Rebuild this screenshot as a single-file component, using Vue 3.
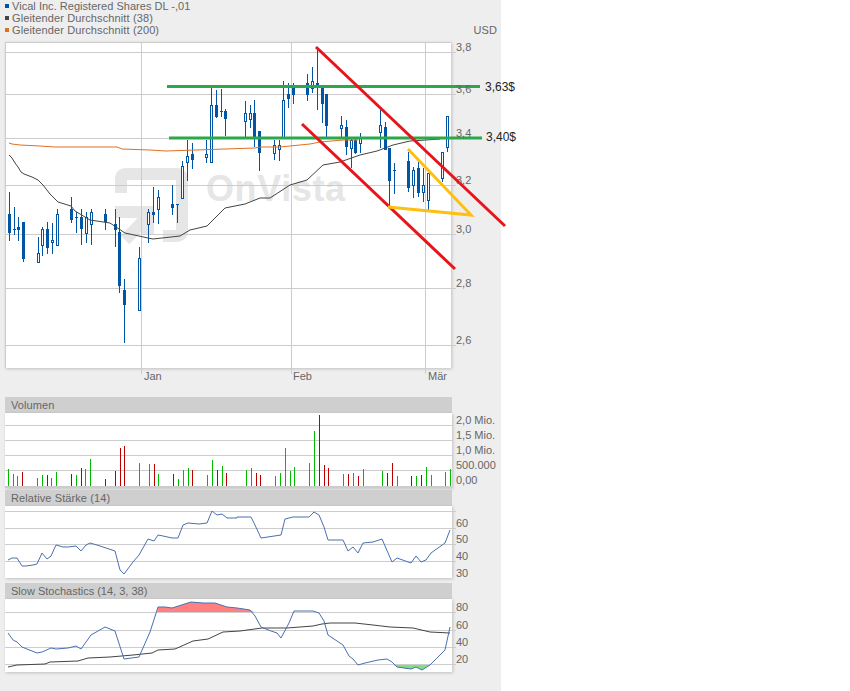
<script setup>
// candles: x, high, low, body top, body bottom, filled (1) or hollow (0)
const candles = [
  [9, 192, 241, 214, 233, 1], [14, 207, 235, 229, 230, 1], [18, 217, 241, 227, 230, 1], [23, 222, 262, 222, 259, 1],
  [38, 237, 262, 253, 262, 0], [42, 227, 256, 229, 245, 0], [47, 222, 254, 229, 248, 1], [52, 223, 254, 240, 242, 0],
  [57, 209, 245, 214, 245, 0], [71, 197, 223, 209, 220, 1], [76, 212, 233, 217, 218, 1], [81, 209, 245, 217, 229, 1],
  [86, 212, 243, 217, 233, 0], [91, 209, 245, 212, 224, 0], [105, 209, 230, 214, 222, 1], [115, 209, 247, 224, 230, 1],
  [119, 217, 293, 232, 286, 1], [124, 279, 343, 290, 305, 1], [139, 247, 310, 258, 310, 0], [148, 209, 243, 212, 224, 0],
  [153, 187, 223, 212, 215, 1], [158, 190, 224, 197, 209, 0], [172, 185, 215, 204, 208, 1], [177, 204, 223, 204, 205, 1],
  [182, 161, 198, 166, 198, 0], [187, 140, 181, 156, 162, 0], [192, 143, 169, 154, 160, 1], [206, 140, 163, 154, 157, 0],
  [211, 87, 163, 105, 162, 0], [216, 90, 118, 105, 117, 1], [221, 89, 117, 111, 112, 1], [225, 109, 136, 111, 119, 1],
  [245, 101, 138, 113, 121, 0], [250, 105, 128, 113, 119, 0], [254, 100, 147, 113, 138, 1], [259, 131, 171, 131, 153, 1],
  [274, 140, 160, 145, 153, 0], [279, 140, 161, 145, 149, 0], [283, 81, 138, 100, 138, 0], [288, 83, 108, 94, 99, 1],
  [293, 83, 104, 88, 95, 1], [307, 74, 101, 83, 95, 1], [312, 67, 93, 81, 88, 0], [317, 48, 110, 83, 88, 1],
  [322, 88, 123, 88, 104, 1], [326, 94, 138, 94, 126, 1], [341, 116, 138, 125, 128, 0], [346, 120, 155, 127, 147, 1],
  [351, 138, 168, 140, 148, 0], [355, 138, 154, 140, 153, 1], [360, 133, 153, 137, 143, 0], [380, 110, 148, 125, 132, 0],
  [385, 122, 150, 127, 150, 1], [389, 148, 205, 148, 181, 1], [394, 163, 194, 170, 171, 1], [408, 152, 192, 161, 188, 1],
  [413, 167, 198, 170, 185, 0], [418, 162, 197, 168, 193, 1], [423, 168, 202, 185, 192, 0], [428, 173, 210, 173, 200, 0],
  [442, 152, 182, 152, 178, 0], [447, 116, 152, 116, 147, 0]
]

const ma38 = '9,155 12,158 15,163 18,167 21,172 24,174 32,177 38,180 43,185 50,194 58,202 71,206 75,211 90,220 110,223 125,233 148,238 153,239 180,236 190,230 207,226 225,208 245,204 260,198 270,198 290,185 307,180 323,165 340,162 360,155 377,151 393,145 410,141 426,140 440,139'
const ma200 = '9,143 12,144 20,145 40,146 55,147 117,147 122,149 150,150 166,151 255,148 260,147 280,147 310,144 320,142 343,140 358,140'

const volume = [
  [8, 469, 'g'], [13, 474, 'g'], [17, 476, 'g'], [22, 472, 'r'], [37, 478, 'g'], [42, 475, 'g'], [47, 475, 'r'], [51, 478, 'g'],
  [56, 472, 'g'], [71, 474, 'r'], [76, 475, 'g'], [81, 468, 'r'], [85, 469, 'g'], [90, 459, 'g'], [105, 479, 'r'], [115, 471, 'r'],
  [120, 448, 'r'], [124, 446, 'r'], [139, 463, 'g'], [149, 464, 'g'], [154, 464, 'r'], [158, 474, 'g'], [173, 474, 'r'], [178, 479, 'g'],
  [183, 470, 'g'], [188, 468, 'g'], [192, 470, 'r'], [207, 475, 'g'], [212, 460, 'g'], [217, 470, 'r'], [222, 466, 'g'], [226, 473, 'r'],
  [246, 470, 'g'], [251, 468, 'g'], [256, 473, 'r'], [260, 475, 'r'], [275, 476, 'g'], [280, 473, 'g'], [285, 448, 'g'], [290, 471, 'g'],
  [294, 467, 'g'], [309, 463, 'g'], [314, 431, 'g'], [319, 415, 'r'], [324, 465, 'r'], [328, 468, 'r'], [343, 474, 'g'], [348, 474, 'r'],
  [353, 473, 'g'], [358, 476, 'r'], [363, 469, 'g'], [382, 471, 'g'], [387, 473, 'r'], [392, 463, 'r'], [397, 476, 'g'], [411, 476, 'r'],
  [416, 476, 'g'], [421, 475, 'r'], [426, 467, 'g'], [431, 475, 'g'], [445, 472, 'g'], [450, 469, 'g']
]

const rsi = '8,560 12,558 17,558 22,566 26,566 33,565 37,564 42,553 47,559 51,556 56,545 63,547 68,547 76,546 81,551 86,545 90,543 97,545 115,551 120,570 124,574 133,562 139,555 148,539 154,541 158,535 163,536 172,538 178,538 183,525 188,523 199,524 207,523 212,511 217,515 222,514 227,518 237,518 237,517 251,517 254,523 261,538 281,535 285,519 293,517 309,517 314,512 319,515 324,527 328,540 343,540 348,551 353,547 358,553 363,543 373,542 382,539 392,562 397,558 411,563 416,556 421,562 426,560 431,553 445,543 450,530'

const stoch = '8,633 13,640 17,642 22,647 37,653 42,652 51,648 56,649 68,648 76,646 81,649 91,635 105,627 115,631 124,659 139,657 150,632 158,607 165,607 172,608 191,602 203,603 215,603 227,607 237,608 250,610 255,616 261,627 271,631 277,633 281,638 289,623 294,611 313,611 319,613 324,621 328,635 343,645 349,656 353,659 358,665 365,663 378,660 387,659 392,662 397,667 411,669 416,667 422,670 430,665 445,650 450,627'
const stochSlow = '8,667 17,665 45,664 50,662 78,661 88,658 110,657 133,655 152,653 158,650 175,649 193,641 208,639 223,632 240,631 262,628 287,628 300,627 313,626 322,624 330,623 355,623 373,625 390,627 413,628 430,632 450,633'
const stochHigh = '157,612 158,607 165,607 172,608 191,602 203,603 215,603 227,607 237,608 250,610 254,612'
const stochLow = '392,664 397,667 411,669 416,667 422,670 430,665 431,664'

const mainGrid = [52, 94, 138, 185, 234, 288, 345]
const mainLabels = [['3,8', 51], ['3,6', 93], ['3,4', 137], ['3,2', 184], ['3,0', 233], ['2,8', 287], ['2,6', 344]]
const months = [['Jan', 141, 144], ['Feb', 291, 293], ['Mär', 425, 428]]
const volLabels = [['2,0 Mio.', 424], ['1,5 Mio.', 439], ['1,0 Mio.', 454], ['500.000', 469], ['0,00', 484]]
const rsiLabels = [['60', 527], ['50', 543], ['40', 560], ['30', 577]]
const stochLabels = [['80', 611], ['60', 629], ['40', 646], ['20', 663]]

const stem = x => x + 0.5
</script>

<template>
  <div class="page">
    <div class="legend">
      <div class="legend-row first"><i class="dot blue"></i>Vical Inc. Registered Shares DL -,01</div>
      <div class="legend-row"><i class="dot dark"></i>Gleitender Durchschnitt (38)</div>
      <div class="legend-row"><i class="dot orange"></i>Gleitender Durchschnitt (200)<span class="unit">USD</span></div>
    </div>

    <!-- Kursverlauf -->
    <div class="plot main-plot">
      <svg class="chart" width="446" height="326" viewBox="5 42 446 326">
        <g class="mark">
          <path d="M121,193 V179 Q121,174 126,174 H177 Q182,174 182,179 V230 Q182,236 176,236 H163" />
          <path d="M115,212 H148 V234" />
          <path d="M125,240 L146,218" />
        </g>
        <text class="mark-text" x="206" y="201" textLength="139">OnVista</text>

        <g class="grid">
          <line v-for="y in mainGrid" :key="y" x1="5" x2="456" :y1="y + 0.5" :y2="y + 0.5" />
          <line v-for="m in months" :key="m[0]" :x1="m[1] + 0.5" :x2="m[1] + 0.5" y1="42" y2="374" />
        </g>

        <g v-for="c in candles" :key="c[0]" class="candle">
          <line :x1="stem(c[0])" :x2="stem(c[0])" :y1="c[1]" :y2="c[2]" />
          <rect v-if="c[5]" class="solid" :x="c[0] - 1" :y="c[3]" width="3" :height="c[4] - c[3]" />
          <rect v-else class="hollow" :x="c[0] - 0.5" :y="c[3] + 0.5" width="2" :height="c[4] - c[3]" />
        </g>

        <polyline class="line ma38" :points="ma38" />
        <polyline class="line ma200" :points="ma200" />

        <g class="drawn">
          <line class="green" x1="167" y1="86.5" x2="480" y2="86.5" />
          <line class="green" x1="169" y1="138" x2="482" y2="138" />
          <line class="red" x1="316" y1="47" x2="505" y2="226" />
          <line class="red" x1="302" y1="124" x2="455" y2="269" />
          <polyline class="yellow" points="408,149 471,215 388,207" />
        </g>

        <text v-for="l in mainLabels" :key="l[0]" class="axis" x="456" :y="l[1]">{{ l[0] }}</text>
        <text v-for="m in months" :key="m[0]" class="axis" :x="m[2]" y="380">{{ m[0] }}</text>
        <text class="note" x="485" y="91">3,63$</text>
        <text class="note" x="486" y="141">3,40$</text>
      </svg>
    </div>

    <section class="panel volume-panel">
      <h3>Volumen</h3>
      <div class="plot vol-plot">
        <svg class="chart" width="447" height="75" viewBox="5 413 447 75">
          <g class="grid">
            <line v-for="y in [425, 440, 455, 470]" :key="y" x1="5" x2="452" :y1="y + 0.5" :y2="y + 0.5" />
          </g>
          <line v-for="b in volume" :key="b[0]" :class="b[2] === 'g' ? 'up' : 'down'" :x1="b[0] + 0.5" :x2="b[0] + 0.5" :y1="b[1]" y2="486" />
          <text v-for="l in volLabels" :key="l[0]" class="axis" x="456" :y="l[1]">{{ l[0] }}</text>
        </svg>
      </div>
    </section>

    <section class="panel rsi-panel">
      <h3>Relative Stärke (14)</h3>
      <div class="plot rsi-plot">
        <svg class="chart" width="447" height="72" viewBox="5 506 447 72">
          <g class="grid">
            <line v-for="y in [511, 528, 544, 561]" :key="y" x1="5" x2="456" :y1="y + 0.5" :y2="y + 0.5" />
          </g>
          <polyline class="line osc" :points="rsi" />
          <text v-for="l in rsiLabels" :key="l[0]" class="axis" x="456" :y="l[1]">{{ l[0] }}</text>
        </svg>
      </div>
    </section>

    <section class="panel stoch-panel">
      <h3>Slow Stochastics (14, 3, 38)</h3>
      <div class="plot stoch-plot">
        <svg class="chart" width="447" height="73" viewBox="5 599 447 73">
          <polygon class="over" :points="stochHigh" />
          <polygon class="under" :points="stochLow" />
          <g class="grid">
            <line v-for="y in [612, 630, 647, 664]" :key="y" x1="5" x2="456" :y1="y + 0.5" :y2="y + 0.5" />
          </g>
          <polyline class="line ma38" :points="stochSlow" />
          <polyline class="line osc" :points="stoch" />
          <text v-for="l in stochLabels" :key="l[0]" class="axis" x="456" :y="l[1]">{{ l[0] }}</text>
        </svg>
      </div>
    </section>
  </div>
</template>

<style scoped>
.page {
  width: 501px;
  height: 691px;
  background: #eeeeee;
  font-family: "Liberation Sans", Arial, sans-serif;
}

.legend {
  height: 42px;
  color: #666;
  font-size: 11px;
  letter-spacing: 0.12px;
}

.legend-row {
  display: flex;
  align-items: center;
  height: 12px;
  padding: 0 4px 0 5px;
  white-space: nowrap;
}

.legend-row.first {
  letter-spacing: 0.03px;
}

.dot {
  width: 4px;
  height: 4px;
  margin-right: 3px;
}

.blue { background: #0055a5; }
.dark { background: #444; }
.orange { background: #e07020; }

.unit {
  margin-left: auto;
}

.plot {
  margin-left: 5px;
  background: #fff;
}

.main-plot {
  width: 446px;
  height: 326px;
  margin-bottom: 29px;
  box-shadow: inset 1px 1px 0 #ccc, 1px 1px 3px rgba(0, 0, 0, 0.2);
}

.chart {
  display: block;
  overflow: visible;
}

.panel h3 {
  width: 447px;
  height: 16px;
  margin: 0 0 0 5px;
  padding-left: 6px;
  box-sizing: border-box;
  background: #cfcfcf;
  color: #666;
  font-size: 11px;
  font-weight: normal;
  line-height: 16px;
  letter-spacing: 0.1px;
}

.stoch-panel h3 {
  letter-spacing: 0;
}

.panel .plot {
  width: 447px;
  box-shadow: 1px 1px 3px rgba(0, 0, 0, 0.2);
}

.vol-plot {
  height: 75px;
}

.rsi-plot {
  height: 72px;
}

.stoch-plot {
  height: 73px;
}

.volume-panel {
  margin-bottom: 2px;
}

.rsi-panel {
  margin-bottom: 5px;
}

.volume-panel .plot {
  background: linear-gradient(#fff 73px, #ccc 73px);
}

.grid line {
  stroke: #ccc;
  stroke-width: 1;
  shape-rendering: crispEdges;
}

.candle line {
  stroke: #0055a5;
  stroke-width: 1;
  shape-rendering: crispEdges;
}

.solid {
  fill: #0055a5;
  shape-rendering: crispEdges;
}

.hollow {
  fill: #fff;
  stroke: #0055a5;
  stroke-width: 1;
  shape-rendering: crispEdges;
}

.line {
  fill: none;
  stroke-width: 1;
}

.ma38 { stroke: #444; }
.ma200 { stroke: #e07020; }
.osc { stroke: #4a70b0; }

.up, .down {
  stroke-width: 1;
  shape-rendering: crispEdges;
}

.up { stroke: #00bb00; }
.down { stroke: #bb0000; }

.over { fill: #ff8080; }
.under { fill: #80e080; }

.mark path {
  fill: none;
  stroke: #e6e6e6;
  stroke-width: 12;
}

.mark-text {
  fill: #e6e6e6;
  font-size: 36px;
  font-weight: bold;
}

.drawn line, .drawn polyline {
  fill: none;
  stroke-width: 3;
}

.green { stroke: #2aa84a; }
.red { stroke: #e8141c; }
.yellow { stroke: #fdc010; }

.axis {
  fill: #666;
  font-size: 11px;
}

.note {
  fill: #222;
  font-size: 12px;
}
</style>
